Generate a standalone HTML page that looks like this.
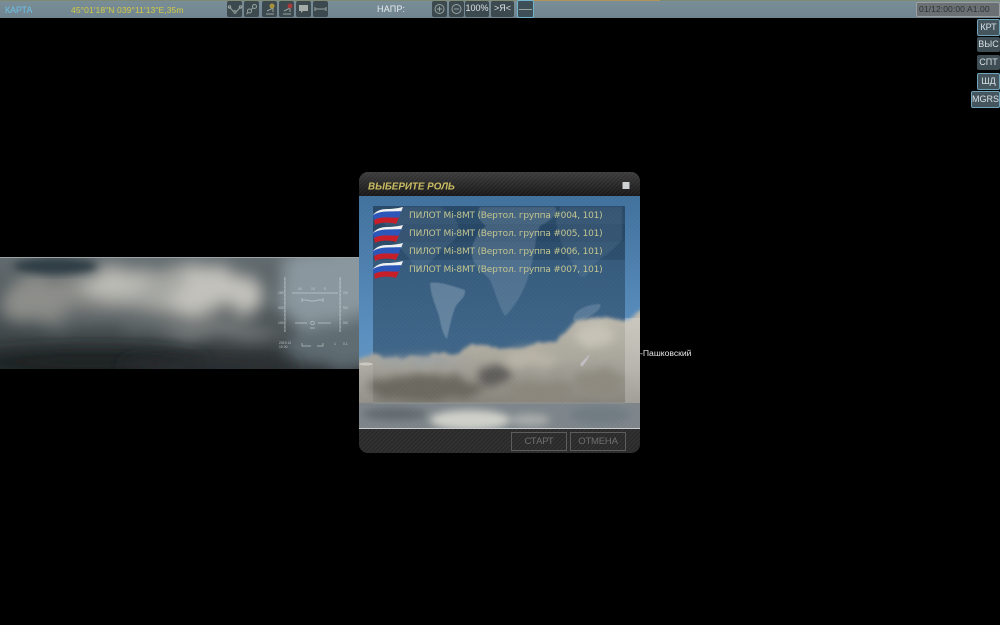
<!DOCTYPE html>
<html><head><meta charset="utf-8">
<style>
html,body{margin:0;padding:0;background:#000;width:1000px;height:625px;overflow:hidden;font-family:"Liberation Sans",sans-serif}
#all{position:absolute;left:0;top:0;width:1000px;height:625px;filter:blur(.35px)}
.a{position:absolute}
#bar{left:0;top:0;width:1000px;height:18px;background:linear-gradient(#7a8e98,#6f848f)}
.b{position:absolute;top:1px;height:16px;width:15px;background:#3c4a50;border-radius:2px}
.t{position:absolute;white-space:nowrap;font-size:9px;line-height:12px}
.r{position:absolute;background:#3f4d55;color:#d8e0e4;font-size:9px;text-align:center;line-height:15px;height:15px;border-radius:2px}
.rb{border:1px solid #6fa3b8;background:#44555e}
.row{position:absolute;left:409px;font-size:9px;line-height:12px;color:#c4c690;white-space:nowrap;font-family:"DejaVu Sans","Liberation Sans",sans-serif;letter-spacing:-.2px}
.fl{position:absolute;left:373px}
.btn{position:absolute;top:432px;height:17px;border:1px solid #5c5c5c;color:#6f6f6f;font-size:9.5px;letter-spacing:-.2px;text-align:center;line-height:17px}
</style></head><body><div id="all">
<svg class="a" style="left:0;top:0" width="1000" height="625" viewBox="0 0 1000 625">
<defs>
<filter id="b4" x="-30%" y="-30%" width="160%" height="160%"><feGaussianBlur stdDeviation="4"/></filter>
<filter id="b8" x="-40%" y="-40%" width="180%" height="180%"><feGaussianBlur stdDeviation="8"/></filter>
<filter id="b1"><feGaussianBlur stdDeviation=".6"/></filter>
<filter id="puff" x="-10%" y="-20%" width="120%" height="140%"><feTurbulence type="fractalNoise" baseFrequency=".06" numOctaves="4" seed="7"/><feDisplacementMap in="SourceGraphic" scale="10" xChannelSelector="R" yChannelSelector="G"/><feGaussianBlur stdDeviation="1.800"/></filter>
<filter id="puffC" x="-20%" y="-30%" width="140%" height="160%"><feTurbulence type="fractalNoise" baseFrequency=".05" numOctaves="3" seed="11"/><feDisplacementMap in="SourceGraphic" scale="14" xChannelSelector="R" yChannelSelector="G"/><feGaussianBlur stdDeviation="4.500"/></filter>
<filter id="puffB" x="-20%" y="-30%" width="140%" height="160%"><feTurbulence type="fractalNoise" baseFrequency=".02" numOctaves="3" seed="3"/><feDisplacementMap in="SourceGraphic" scale="35" xChannelSelector="R" yChannelSelector="G"/><feGaussianBlur stdDeviation="8"/></filter>
<clipPath id="band"><rect x="0" y="257" width="360" height="112"/></clipPath>
<clipPath id="dlg"><rect x="359" y="196" width="281" height="233"/></clipPath>
<linearGradient id="bandbg" x1="0" y1="0" x2="0" y2="1"><stop offset="0" stop-color="#626b6f"/><stop offset=".55" stop-color="#4a5255"/><stop offset="1" stop-color="#2b3032"/></linearGradient>
<linearGradient id="sky" x1="0" y1="0" x2="0" y2="1"><stop offset="0" stop-color="#40709c"/><stop offset=".6" stop-color="#5a8fbf"/><stop offset="1" stop-color="#6d99bd"/></linearGradient>
<linearGradient id="hdr" x1="0" y1="0" x2="0" y2="1"><stop offset="0" stop-color="#3c3c3c"/><stop offset="1" stop-color="#171717"/></linearGradient>
<linearGradient id="cl" gradientUnits="userSpaceOnUse" x1="0" y1="315" x2="0" y2="405"><stop offset="0" stop-color="#bdb9ad"/><stop offset=".5" stop-color="#a8a59b"/><stop offset="1" stop-color="#85827a"/></linearGradient>
<pattern id="hatch" width="3" height="3" patternUnits="userSpaceOnUse" patternTransform="rotate(45)"><rect width="1" height="3" fill="#fff" fill-opacity=".05"/></pattern>
</defs>

<!-- left cloud band -->
<g clip-path="url(#band)">
<rect x="0" y="257" width="360" height="112" fill="url(#bandbg)"/>
<g filter="url(#puffB)">
<ellipse cx="335" cy="290" rx="60" ry="48" fill="#8a979e"/>
<ellipse cx="345" cy="345" rx="60" ry="24" fill="#5f6c72"/>
<ellipse cx="150" cy="292" rx="115" ry="24" fill="#a6a7a3"/>
<ellipse cx="60" cy="298" rx="55" ry="22" fill="#8d8e8a"/>
<ellipse cx="215" cy="292" rx="50" ry="20" fill="#c2c1bb"/>
<ellipse cx="110" cy="286" rx="34" ry="10" fill="#bebdb7"/>
<ellipse cx="150" cy="322" rx="110" ry="11" fill="#646b6c"/>
<ellipse cx="220" cy="330" rx="60" ry="8" fill="#7a7f7e"/>
</g>
<ellipse cx="55" cy="266" rx="42" ry="8" fill="#2f3c45" filter="url(#b4)"/>
<ellipse cx="90" cy="362" rx="120" ry="14" fill="#1e2224" filter="url(#b8)"/>
<ellipse cx="210" cy="366" rx="90" ry="9" fill="#2a2e30" filter="url(#b8)"/>
<rect x="0" y="257" width="360" height="1" fill="#9aa3a5"/>
<!-- HUD -->
<g stroke="#d4dcde" stroke-width=".7" fill="none" opacity=".75">
<path d="M285 277V332M340 277V332"/>
<path d="M284 279h1M284 283h1M284 287h1M284 291h1M284 295h1M284 299h1M284 303h1M284 307h1M284 311h1M284 315h1M284 319h1M284 323h1M284 327h1M284 331h1"/>
<path d="M340 279h1M340 283h1M340 287h1M340 291h1M340 295h1M340 299h1M340 303h1M340 307h1M340 311h1M340 315h1M340 319h1M340 323h1M340 327h1M340 331h1"/>
<path d="M292 293H338M302 300h5l3 1h5l3-1h5M302 298v4M323 298v4M295 323h12M318 323h13M310 328h5"/>
<circle cx="312.500" cy="323" r="1.800"/>
<path d="M302 343v3h9M317 346h6l0-3"/>
</g>
<g font-size="3.400" fill="#d4dcde" opacity=".8" font-family="Liberation Sans">
<text x="278" y="294">150</text><text x="278" y="309">030</text><text x="278" y="324">100</text>
<text x="298" y="290">10</text><text x="311" y="290">10</text><text x="324" y="290">5</text>
<text x="343" y="294">2IC</text><text x="343" y="309">9IC</text><text x="343" y="324">5IC</text>
<text x="279" y="344">2019.12</text><text x="279" y="348">10 00</text>
<text x="334" y="345">1</text><text x="343" y="345">0.1</text>
</g>
</g>

<!-- label behind dialog -->
<text x="640" y="356" font-size="8.600" fill="#e8e8e8" font-family="Liberation Sans">-Пашковский</text>

<!-- dialog -->
<rect x="359" y="172" width="281" height="281" rx="9" fill="#1a1a1a"/>
<path d="M359 196V181a9 9 0 0 1 9-9H631a9 9 0 0 1 9 9V196Z" fill="url(#hdr)"/>
<path d="M359 196V181a9 9 0 0 1 9-9H631a9 9 0 0 1 9 9V196Z" fill="url(#hatch)"/>
<path d="M359 429H640V444a9 9 0 0 1-9 9H368a9 9 0 0 1-9-9Z" fill="#2a2a2a"/>
<path d="M359 429H640V444a9 9 0 0 1-9 9H368a9 9 0 0 1-9-9Z" fill="url(#hatch)"/>

<g clip-path="url(#dlg)">
<rect x="359" y="196" width="281" height="233" fill="url(#sky)"/>
<!-- panel -->
<rect x="373" y="206" width="252" height="197" fill="#16283a" fill-opacity=".42"/>
<rect x="373" y="206" width="252" height="54" fill="#0e2238" fill-opacity=".2"/>
<rect x="373" y="224" width="252" height="18" fill="#0e2238" fill-opacity=".1"/>
<!-- world map -->
<g fill="#b5c8d6" filter="url(#b1)">
<path fill-opacity=".32" d="M430 283C438 281 450 285 465 290C466 297 460 300 456 306C452 314 450 326 447 339C443 335 441 326 439 316C436 306 431 297 430 283Z"/>
<path fill-opacity=".1" d="M404 207L440 207C450 212 462 222 458 234C452 246 442 246 434 258C428 264 422 272 418 272C412 262 408 256 400 248C392 240 388 232 384 222C388 214 396 208 404 207Z"/>
<path fill-opacity=".2" d="M480 207H555C560 214 548 222 540 226C534 240 536 250 530 270C526 288 516 306 505 316C498 305 496 294 490 280C484 272 474 268 472 256C470 244 478 232 486 226C478 220 476 212 480 207Z"/>
<path fill-opacity=".1" d="M560 207H622V240C612 252 600 258 590 268C584 286 578 274 572 262C564 252 558 236 556 222Z"/>
<path fill-opacity=".24" d="M573 320C573 309 590 304 600 304C603 310 590 316 578 323Z"/>
</g>
<!-- clouds -->
<g filter="url(#puff)">
<path d="M340 359L373 356L420 356L459 353L472 343L500 349L522 349L539 341L556 343L572 323L592 317L625 322L640 312L660 306V440H340Z" fill="url(#cl)"/>
</g>
<g filter="url(#puffC)">
<ellipse cx="425" cy="388" rx="58" ry="13" fill="#6b675f"/>
<ellipse cx="495" cy="376" rx="17" ry="10" fill="#5e5d5a"/>
<ellipse cx="540" cy="392" rx="32" ry="10" fill="#8a867c"/>
<ellipse cx="600" cy="383" rx="26" ry="15" fill="#8d897f"/>
<ellipse cx="595" cy="335" rx="20" ry="11" fill="#c6c2b6"/>
<ellipse cx="530" cy="358" rx="26" ry="9" fill="#b8b3a6"/>
<ellipse cx="415" cy="361" rx="50" ry="4" fill="#98a0a4"/>
</g>
<!-- margins lighter over the cloud only -->
<rect x="359" y="365" width="14" height="38" fill="#fff" fill-opacity=".1"/>
<rect x="625" y="318" width="15" height="85" fill="#fff" fill-opacity=".22"/>
<ellipse cx="366" cy="364" rx="7" ry="1.500" fill="#d8d8d4" opacity=".7"/>
<!-- strip under the panel -->
<rect x="359" y="403" width="281" height="26" fill="#7d858a"/>
<g filter="url(#b4)">
<ellipse cx="395" cy="414" rx="32" ry="6" fill="#5f676c"/>
<ellipse cx="470" cy="420" rx="40" ry="10" fill="#cfd0c9"/>
<ellipse cx="530" cy="420" rx="20" ry="6" fill="#a9acaa"/>
<ellipse cx="600" cy="415" rx="30" ry="9" fill="#6f7a82"/>
</g>
<rect x="373" y="402.500" width="252" height="1" fill="#a2a39e" fill-opacity=".5"/>
<!-- hatch & glint -->
<rect x="359" y="196" width="281" height="233" fill="url(#hatch)" opacity=".5"/>
<path d="M580 364L590 354L587 360L582 367Z" fill="#dcd4e8" opacity=".55"/>
<rect x="359" y="428" width="281" height="1.500" fill="#c9cdd0"/>
</g>
<path d="M622.500 182h7v7h-7z" fill="#cfd2d2"/>
<text x="368" y="189.500" font-size="9.800" font-weight="bold" font-style="italic" fill="#c9bc62" font-family="Liberation Sans">ВЫБЕРИТЕ РОЛЬ</text>
</svg>

<!-- top bar -->
<div class="a" id="bar"></div>
<div class="a" style="left:0;top:0;width:1000px;height:1px;background:#7f8a72"></div>
<div class="a" style="left:530px;top:0;width:130px;height:1px;background:#b39458"></div>
<div class="t" style="left:5px;top:4px;color:#6fc0e6;font-size:8.800px">КАРТА</div>
<div class="t" style="left:71px;top:4px;color:#d3cc45;font-size:8.500px;letter-spacing:.1px">45°01'18"N 039°11'13"E,35m</div>
<div class="b" style="left:227px"></div><div class="b" style="left:244px"></div><div class="b" style="left:262px"></div><div class="b" style="left:279px"></div><div class="b" style="left:296px"></div><div class="b" style="left:313px"></div>
<svg class="a" style="left:222px;top:0" width="112" height="18" fill="none" stroke="#98a29e" stroke-width="1">
<path d="M7.500 7L11 11H15L18.500 7"/><circle cx="7.500" cy="7" r="1.200"/><circle cx="13" cy="12" r="1.200"/><circle cx="18.500" cy="7" r="1.200"/>
<circle cx="27.500" cy="11" r="2"/><circle cx="32.500" cy="6.500" r="2"/><path d="M24.500 14l1.500-1.500M29 9.500l2-1.500"/>
<path d="M44 14h8M45 11l6-3v4"/><circle cx="50" cy="6" r="2.500" fill="#a8933c" stroke="none"/>
<path d="M61 14h8M62 11l6-3v4"/><circle cx="68" cy="6" r="2.500" fill="#a63a3a" stroke="none"/>
<path d="M77 5h9v6h-5l-2 2v-2h-2Z" fill="#a4aca8" stroke="none"/>
<path d="M93 9h11M93 7v4M104 7v4"/>
</svg>
<div class="t" style="left:377px;top:3px;color:#e6ecee;font-size:9px;letter-spacing:.2px">НАПР:</div>
<div class="b" style="left:432px"></div><div class="b" style="left:449px"></div>
<svg class="a" style="left:432px;top:0" width="34" height="18" fill="none" stroke="#98a29e" stroke-width="1">
<circle cx="7.500" cy="9" r="4.500"/><path d="M5 9h5M7.500 6.500v5"/><circle cx="24.500" cy="9" r="4.500"/><path d="M22 9h5"/></svg>
<div class="b" style="left:465px;width:24px;color:#dde3e5;font-size:9px;text-align:center;line-height:15px">100%</div>
<div class="b" style="left:491px;width:23px;color:#dde3e5;font-size:9px;text-align:center;line-height:15px">&gt;Я&lt;</div>
<div class="b" style="left:517px;top:0;width:15px;height:16px;border:1px solid #6fb3cc;background:#3f4f57"></div>
<div class="a" style="left:519px;top:9px;width:13px;height:1px;background:#9aa59f"></div>
<div class="a" style="left:916px;top:2px;width:82px;height:13px;background:#6a7073;border:1px solid #9a9f9f;border-radius:2px;color:#2e3234;font-size:8.500px;line-height:13px;text-indent:2px;white-space:nowrap;letter-spacing:.1px">01/12:00:00 A1.00</div>

<!-- right buttons -->
<div class="r rb" style="left:977px;top:19px;width:21px">КРТ</div>
<div class="r" style="left:977px;top:37px;width:23px">ВЫС</div>
<div class="r" style="left:977px;top:55px;width:23px">СПТ</div>
<div class="r rb" style="left:977px;top:73px;width:21px">ШД</div>
<div class="r rb" style="left:971px;top:91px;width:27px">MGRS</div>

<!-- rows -->
<svg width="0" height="0" style="position:absolute"><defs><g id="f">
<path d="M0 8C3 4 8 2 14 2C20 2 26 1 30 0L28 5C18 5 8 3 0 9Z" fill="#f0f2f2"/>
<path d="M0 8C8 3 18 5 28 4L25.500 12C17 12 8 10 1 14Z" fill="#2c57b8"/>
<path d="M1 13C8 9 16 11 26 10.500L23 17C17 15 8 15 2 18Z" fill="#c61f2a"/>
</g></defs></svg>
<svg class="fl" style="top:207px" width="31" height="19" viewBox="0 0 31 19"><use href="#f"/></svg>
<svg class="fl" style="top:225px" width="31" height="19" viewBox="0 0 31 19"><use href="#f"/></svg>
<svg class="fl" style="top:243px" width="31" height="19" viewBox="0 0 31 19"><use href="#f"/></svg>
<svg class="fl" style="top:261px" width="31" height="19" viewBox="0 0 31 19"><use href="#f"/></svg>
<div class="row" style="top:210px">ПИЛОТ Mi-8MT (Вертол. группа #004, 101)</div>
<div class="row" style="top:228px">ПИЛОТ Mi-8MT (Вертол. группа #005, 101)</div>
<div class="row" style="top:246px">ПИЛОТ Mi-8MT (Вертол. группа #006, 101)</div>
<div class="row" style="top:264px">ПИЛОТ Mi-8MT (Вертол. группа #007, 101)</div>

<div class="btn" style="left:511px;width:54px">СТАРТ</div>
<div class="btn" style="left:570px;width:54px">ОТМЕНА</div>
</div></body></html>
